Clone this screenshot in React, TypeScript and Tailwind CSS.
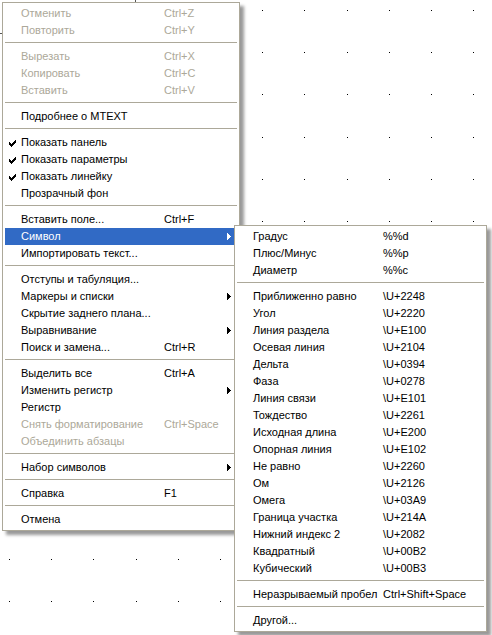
import React from "react";

type Row =
  | { sep: true }
  | {
      sep?: false;
      label: string;
      shortcut?: string;
      disabled?: boolean;
      checked?: boolean;
      arrow?: boolean;
      active?: boolean;
    };

const mainMenu: Row[] = [
  { label: "Отменить", shortcut: "Ctrl+Z", disabled: true },
  { label: "Повторить", shortcut: "Ctrl+Y", disabled: true },
  { sep: true },
  { label: "Вырезать", shortcut: "Ctrl+X", disabled: true },
  { label: "Копировать", shortcut: "Ctrl+C", disabled: true },
  { label: "Вставить", shortcut: "Ctrl+V", disabled: true },
  { sep: true },
  { label: "Подробнее о MTEXT" },
  { sep: true },
  { label: "Показать панель", checked: true },
  { label: "Показать параметры", checked: true },
  { label: "Показать линейку", checked: true },
  { label: "Прозрачный фон" },
  { sep: true },
  { label: "Вставить поле...", shortcut: "Ctrl+F" },
  { label: "Символ", arrow: true, active: true },
  { label: "Импортировать текст..." },
  { sep: true },
  { label: "Отступы и табуляция..." },
  { label: "Маркеры и списки", arrow: true },
  { label: "Скрытие заднего плана..." },
  { label: "Выравнивание", arrow: true },
  { label: "Поиск и замена...", shortcut: "Ctrl+R" },
  { sep: true },
  { label: "Выделить все", shortcut: "Ctrl+A" },
  { label: "Изменить регистр", arrow: true },
  { label: "Регистр" },
  { label: "Снять форматирование", shortcut: "Ctrl+Space", disabled: true },
  { label: "Объединить абзацы", disabled: true },
  { sep: true },
  { label: "Набор символов", arrow: true },
  { sep: true },
  { label: "Справка", shortcut: "F1" },
  { sep: true },
  { label: "Отмена" },
];

const subMenu: Row[] = [
  { label: "Градус", shortcut: "%%d" },
  { label: "Плюс/Минус", shortcut: "%%p" },
  { label: "Диаметр", shortcut: "%%c" },
  { sep: true },
  { label: "Приближенно равно", shortcut: "\\U+2248" },
  { label: "Угол", shortcut: "\\U+2220" },
  { label: "Линия раздела", shortcut: "\\U+E100" },
  { label: "Осевая линия", shortcut: "\\U+2104" },
  { label: "Дельта", shortcut: "\\U+0394" },
  { label: "Фаза", shortcut: "\\U+0278" },
  { label: "Линия связи", shortcut: "\\U+E101" },
  { label: "Тождество", shortcut: "\\U+2261" },
  { label: "Исходная длина", shortcut: "\\U+E200" },
  { label: "Опорная линия", shortcut: "\\U+E102" },
  { label: "Не равно", shortcut: "\\U+2260" },
  { label: "Ом", shortcut: "\\U+2126" },
  { label: "Омега", shortcut: "\\U+03A9" },
  { label: "Граница участка", shortcut: "\\U+214A" },
  { label: "Нижний индекс 2", shortcut: "\\U+2082" },
  { label: "Квадратный", shortcut: "\\U+00B2" },
  { label: "Кубический", shortcut: "\\U+00B3" },
  { sep: true },
  { label: "Неразрываемый пробел", shortcut: "Ctrl+Shift+Space" },
  { sep: true },
  { label: "Другой..." },
];

function Check() {
  return (
    <svg width="7" height="7" viewBox="0 0 7 7" className="absolute left-[4px] top-[6px]" shapeRendering="crispEdges">
      <path d="M0 2h1v3h-1zM1 3h1v3h-1zM2 4h1v3h-1zM3 3h1v3h-1zM4 2h1v3h-1zM5 1h1v3h-1zM6 0h1v3h-1z" fill="#000" />
    </svg>
  );
}

function Arrow({ white }: { white?: boolean }) {
  return (
    <svg width="4" height="7" viewBox="0 0 4 7" className="absolute right-[6px] top-[5px]" shapeRendering="crispEdges">
      <path d="M0 0h1v7h-1zM1 1h1v5h-1zM2 2h1v3h-1zM3 3h1v1h-1z" fill={white ? "#fff" : "#000"} />
    </svg>
  );
}

function Menu({ rows, width, labelWidth }: { rows: Row[]; width: string; labelWidth: string }) {
  return (
    <div
      className={`${width} flex flex-col border border-[#ACA899] bg-white p-[2px] shadow-[4px_4px_3px_rgba(0,0,0,0.4)]`}
    >
      {rows.map((r, i) =>
        r.sep ? (
          <div key={i} className="h-[9px] pt-[3px]">
            <div className="h-px bg-[#ACA899]" />
          </div>
        ) : (
          <div
            key={i}
            className={`relative flex h-[17px] items-center whitespace-nowrap leading-[17px] ${
              r.active ? "bg-[#316AC5] text-white" : r.disabled ? "text-[#ACA899]" : "text-black"
            }`}
          >
            {r.checked && <Check />}
            <span className={`${labelWidth} shrink-0 pl-[16px]`}>{r.label}</span>
            {r.shortcut && <span>{r.shortcut}</span>}
            {r.arrow && <Arrow white={r.active} />}
          </div>
        )
      )}
    </div>
  );
}

export default function App() {
  const xs = Array.from({ length: 12 }, (_, i) => Math.round(9 + 42.2 * i));
  const ys = Array.from({ length: 15 }, (_, j) => Math.round(10 + 42.2 * j));
  return (
    <div className="relative h-[635px] w-[492px] overflow-hidden bg-white font-['Liberation_Sans',Arial,sans-serif] text-[11px]">
      <svg className="absolute inset-0" width="492" height="635" shapeRendering="crispEdges">
        {xs.map((x) => ys.map((y) => <rect key={`${x}-${y}`} x={x} y={y} width="1" height="1" fill="#000" />))}
        <rect x="135" y="0" width="1" height="3" fill="#555" />
        <rect x="0" y="33" width="3" height="1" fill="#555" />
      </svg>
      <div className="absolute left-[2px] top-[2px]">
        <Menu rows={mainMenu} width="w-[238px]" labelWidth="w-[159px]" />
      </div>
      <div className="absolute left-[234px] top-[225px]">
        <Menu rows={subMenu} width="w-[253px]" labelWidth="w-[146px]" />
      </div>
    </div>
  );
}
